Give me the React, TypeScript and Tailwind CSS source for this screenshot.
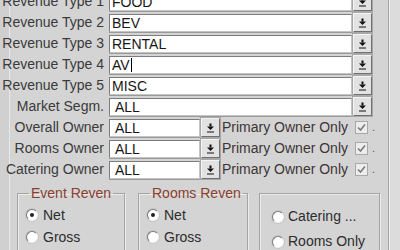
import React from "react";

const DropIcon = () => (
  <svg width="9" height="10" viewBox="0 0 9 10">
    <rect x="3.5" y="0.5" width="2" height="3" fill="#111" />
    <polygon points="1,3.5 8,3.5 4.5,7" fill="#111" />
    <rect x="1" y="8.5" width="7" height="1" fill="#111" />
  </svg>
);

const DropButton = () => (
  <div className="ml-[1px] w-[19px] h-[19px] shrink-0 flex items-center justify-center bg-[#e2e2e2] border border-t-[#f4f4f4] border-l-[#f4f4f4] border-b-[#707070] border-r-[#707070] shadow-[0_0_0_1px_#a8a8a8]">
    <DropIcon />
  </div>
);

const inputCls =
  "h-[18px] shrink-0 flex items-center bg-white border border-t-[#7c7c7c] border-l-[#7c7c7c] border-b-[#c4c4c4] border-r-[#c4c4c4] shadow-[0_1px_0_#9a9a9a] text-[#161616] overflow-hidden";

const Check = () => (
  <div className="w-[13px] h-[13px] shrink-0 bg-[#ededed] border border-[#a8a8a8] flex items-center justify-center">
    <svg width="9" height="9" viewBox="0 0 9 9">
      <path d="M1 4.5 L3.5 7 L8 1.5" stroke="#7a7a7a" strokeWidth="1.6" fill="none" />
    </svg>
  </div>
);

const Label = ({ text }: { text: string }) => (
  <span className="w-[104px] -ml-[10px] mr-[5px] shrink-0 text-right text-[#3a3a3a] whitespace-nowrap">{text}</span>
);

const WideRow = ({ label, value, pad, caret }: { label: string; value: string; pad?: boolean; caret?: boolean }) => (
  <div className="flex items-center h-[21px]">
    <Label text={label} />
    <div className={`w-[243px] ${inputCls} ${pad ? "pl-[5px]" : "pl-[2px]"}`}>
      <span className="leading-[16px]">{value}</span>
      {caret && <span className="w-px h-[14px] bg-black ml-[1px]" />}
    </div>
    <DropButton />
  </div>
);

const OwnerRow = ({ label }: { label: string }) => (
  <div className="flex items-center h-[21px]">
    <Label text={label} />
    <div className={`w-[91px] pl-[5px] ${inputCls}`}>
      <span className="leading-[16px]">ALL</span>
    </div>
    <DropButton />
    <span className="ml-[2px] w-[133px] shrink-0 text-[#3d3434] whitespace-nowrap">Primary Owner Only</span>
    <Check />
    <span className="ml-[4px] text-[#555] text-[11px]">.</span>
  </div>
);

const Radio = ({ checked = false }: { checked?: boolean }) => (
  <div className="w-[12px] h-[12px] shrink-0 rounded-full bg-white border border-t-[#7a7a7a] border-l-[#7a7a7a] border-b-[#f2f2f2] border-r-[#f2f2f2] shadow-[0_0_0_1px_#c6c6c6] flex items-center justify-center">
    {checked && <div className="w-[4px] h-[4px] rounded-full bg-[#222]" />}
  </div>
);

const Option = ({ label, checked, tall }: { label: string; checked?: boolean; tall?: boolean }) => (
  <div className={`flex items-center ${tall ? "h-[25px]" : "h-[22px]"}`}>
    <Radio checked={checked} />
    <span className={`${tall ? "ml-[4px]" : "ml-[5px]"} text-[#2c2c2c] whitespace-nowrap`}>{label}</span>
  </div>
);

const groupCls = "h-[80px] shrink-0 border border-[#a4a4a4] shadow-[inset_1px_1px_0_#ececec,1px_1px_0_#ececec]";

export default function App() {
  return (
    <div className="w-[400px] h-[250px] overflow-hidden bg-[#d4d4d4] flex text-[14px]" style={{ fontFamily: '"Liberation Sans", Arial, sans-serif' }}>
      <div className="w-[9px] shrink-0 bg-[#d0d0d0]" />
      <div className="w-[379px] shrink-0 border-l border-[#e9e9e9] flex flex-col">
        <div className="-mt-[9px] flex flex-col">
          <WideRow label="Revenue Type 1" value="FOOD" />
          <WideRow label="Revenue Type 2" value="BEV" />
          <WideRow label="Revenue Type 3" value="RENTAL" />
          <WideRow label="Revenue Type 4" value="AV" caret />
          <WideRow label="Revenue Type 5" value="MISC" />
          <WideRow label="Market Segm." value="ALL" pad />
          <OwnerRow label="Overall Owner" />
          <OwnerRow label="Rooms Owner" />
          <OwnerRow label="Catering Owner" />
        </div>
        <div className="mt-[5px] ml-[7px] flex items-start">
          <fieldset className={`w-[108px] pl-[8px] ${groupCls}`}>
            <legend className="ml-[3px] px-[2px] leading-[16px] text-[#8a3e2c]">Event Reven</legend>
            <div className="mt-[3px] flex flex-col">
              <Option label="Net" checked />
              <Option label="Gross" />
            </div>
          </fieldset>
          <fieldset className={`ml-[13px] w-[110px] pl-[8px] ${groupCls}`}>
            <legend className="ml-[3px] px-[2px] leading-[16px] text-[#8a3e2c]">Rooms Reven</legend>
            <div className="mt-[3px] flex flex-col">
              <Option label="Net" checked />
              <Option label="Gross" />
            </div>
          </fieldset>
          <fieldset className={`ml-[11px] mt-[8px] w-[121px] pl-[12px] pt-[10px] ${groupCls}`}>
            <div className="flex flex-col">
              <Option label="Catering ..." tall />
              <Option label="Rooms Only" tall />
            </div>
          </fieldset>
        </div>
      </div>
      <div className="flex-1 border-l border-[#a6a6a6] bg-[#dcdcdc] shadow-[inset_1px_0_0_#f0f0f0]" />
    </div>
  );
}
